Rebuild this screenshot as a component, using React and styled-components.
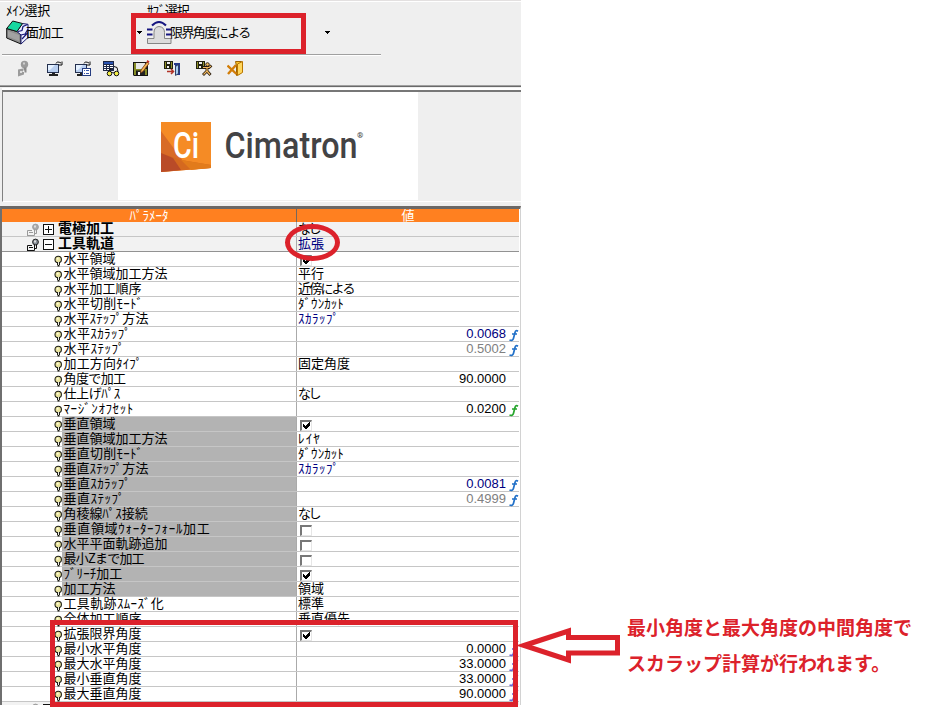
import React from 'react';
import styled, { createGlobalStyle } from 'styled-components';

const Global = createGlobalStyle`
  body { margin: 0; background: #fff; }
  * { box-sizing: border-box; }
  svg { display: block; flex: none; }
`;

const RED = '#dc222b';
const UI_FONT = '"Noto Sans CJK JP", "Liberation Sans", sans-serif';

/* Letter spacing that brings a 13px string to its designed width. */
const isHalf = (c) => /[\uff61-\uff9f\x20-\x7e]/.test(c);
const spacing = (text, width, size = 13) => {
  const chars = [...text];
  const natural = chars.reduce((n, c) => n + (isHalf(c) ? size / 2 : size), 0);
  return (width - natural) / chars.length;
};

const Page = styled.div`
  position: relative;
  width: 925px;
  height: 709px;
  overflow: hidden;
  display: flex;
  background: #fff;
  font-family: ${UI_FONT};
  font-size: 13px;
  color: #000;
`;

const Panel = styled.main`
  width: 521px;
  height: 705px;
  flex: none;
  overflow: hidden;
  display: flex;
  flex-direction: column;
  background: #efefef;
`;

const Fit = styled.span`
  white-space: nowrap;
  letter-spacing: ${(p) => p.$ls}px;
`;

const Label = ({ text, width, size }) => <Fit $ls={spacing(text, width, size)}>{text}</Fit>;

const Selectors = styled.section`
  height: 54px;
  flex: none;
  border-top: 1px solid #e3e0e0;
  box-shadow: inset 0 1px #fff;
  display: grid;
  grid-template-columns: 141px 240px;
`;

const Selector = styled.div`
  display: flex;
  flex-direction: column;
  padding: 1px 0 0 6px;
`;

const Caption = styled.div`
  height: 15px;
  line-height: 15px;
`;

const Choice = styled.div`
  display: flex;
  align-items: center;
  height: 27px;
  line-height: 15px;
  margin-top: 2px;
`;

const ChoiceText = styled.div`
  margin: 0 0 2px ${(p) => p.$pull}px;
`;

const Rule = styled.div`
  width: 379px;
  height: 2px;
  flex: none;
  margin-left: 2px;
  background: #a0a0a0;
  border-bottom: 1px solid #fff;
`;

const Toolbar = styled.nav`
  height: 29px;
  flex: none;
  display: grid;
  grid-template-columns: 32px 28px 28px 30px 31px 32px 31px 20px;
  padding: 4px 0 0 15px;
`;

const Banner = styled.section`
  height: 121px;
  flex: none;
  display: flex;
  flex-direction: column;
  border-top: 1px solid #a0a0a0;
  box-shadow: inset 0 1px #696969;
  padding-top: 2px;
`;

const BannerWell = styled.div`
  height: 112px;
  margin: 2px 0 0 2px;
  border-left: 1px solid #808080;
  border-top: 2px solid #777;
  border-bottom: 1px solid #fff;
  box-shadow: 0 -2px #fff;
  background: #efefef;
  padding-left: 115px;
`;

const LogoCard = styled.div`
  width: 300px;
  height: 108px;
  background: #fff;
  padding: 29px 0 0 42px;
`;

const Table = styled.section`
  flex: none;
  width: 521px;
  border-top: 3px solid #6b6866;
  border-left: 2px solid #6f6f6f;
  border-right: 1px solid #d2d2d2;
  background: #fff;
  padding-right: 1px;
`;

const TableHead = styled.div`
  height: 13px;
  display: grid;
  grid-template-columns: 295px 1fr;
  background: #ff8020;
  color: #fff;
  line-height: 11px;
  text-align: center;
`;

const HeadCell = styled.div`
  height: 13px;
  border-right: ${(p) => (p.$divider ? '1px solid #75685e' : '0')};
`;

const Row = styled.div`
  height: 15px;
  display: grid;
  grid-template-columns: 295px 1fr;
  background: ${(p) => (p.$group ? '#f2f2f2' : '#fff')};
  border-bottom: 1px solid ${(p) => (p.$strong ? '#929292' : '#c6c6c6')};
`;

const NameCell = styled.div`
  display: flex;
  height: 14px;
  line-height: 11px;
  padding-left: ${(p) => (p.$group ? 24 : 52)}px;
  border-right: 1px solid #aaa;
`;

const Name = styled.div`
  flex: 1;
  height: 14px;
  padding-left: 1.5px;
  background: ${(p) => (p.$marked ? '#b3b3b3' : 'transparent')};
`;

const GroupName = styled.div`
  font-weight: 700;
  font-size: 14px;
  margin-left: 4px;
  line-height: 10px;
`;

const inks = { blue: '#000080', gray: '#808080', black: '#000' };

const ValueCell = styled.div`
  display: flex;
  height: 14px;
  line-height: 11px;
  padding-left: 1px;
  color: ${(p) => inks[p.$ink || 'black']};
`;

const NumberText = styled.div`
  width: 208px;
  text-align: right;
  font-family: "Liberation Sans", sans-serif;
  line-height: 14px;
`;

const FnMark = styled.span`
  width: 12px;
  height: 17px;
  margin: 1px 0 -3px 2px;
`;

const Check = styled.span`
  width: 12px;
  height: 11px;
  margin: 3px 0 0 2px;
  border-top: 2px solid #777;
  border-left: 2px solid #777;
  border-right: 1px solid #e6e6e6;
  border-bottom: 1px solid #e6e6e6;
  background: #fff;
`;

const Sidebar = styled.aside`
  flex: 1;
  padding: 609px 0 0 106px;
`;

const Note = styled.p`
  margin: 0;
  font-size: 19px;
  font-weight: 700;
  line-height: 36px;
  color: ${RED};
  white-space: nowrap;
`;

const Highlight = styled.div`
  position: absolute;
  left: ${(p) => p.$x}px;
  top: ${(p) => p.$y}px;
  width: ${(p) => p.$w}px;
  height: ${(p) => p.$h}px;
  border: 5px solid ${RED};
  border-radius: ${(p) => (p.$round ? '50%' : '0')};
`;

const ArrowLayer = styled.svg`
  position: absolute;
  left: 512px;
  top: 622px;
`;

const Caret = styled.svg`
  margin-left: ${(p) => p.$gap}px;
`;

const Dropdown = ({ gap }) => (
  <Caret $gap={gap} width="5" height="3" shapeRendering="crispEdges">
    <path d="M0 0h5v1H4v1H3v1H2V2H1V1H0z" />
  </Caret>
);

const CubeIcon = () => (
  <svg width="23" height="25" viewBox="0 0 23 25">
    <path d="M.7 8.500L11 11.500l4 3v9.500L.7 18z" fill="#8c8c8c" stroke="#111" />
    <path d="M11 11.500L16.500 3.500l5.500.8v13.200L15 24v-9z" fill="#eef0ff" stroke="#18186c" />
    <path d="M.7 8.500L6.700 1l9.800 2.500L11 11.500z" fill="#16d7a0" stroke="#111" />
    <path d="M12 11.500l4-1 1-4 4.500-2M15 15l4-1 3-5M16 19l5.500-6" fill="none" stroke="#17177b" strokeWidth="1.200" />
    <path d="M2 11l11 4v6L2 16.500z" fill="#a2a2a2" />
  </svg>
);

const ContourIcon = () => (
  <svg width="25" height="23" viewBox="0 0 25 23">
    <path d="M.5 22.500v-5h6.500v-6q0-5.500 5-6 5.500.5 5.500 6v6H24v5z" fill="#dcdcdc" stroke="#858585" />
    <path d="M5 4.500Q12-2.500 19 4.500M0 8.500h5.500M0 13.500h5.500M19 8.500h5.500M19 13.500h5.500" fill="none" stroke="#161680" strokeWidth="2" />
  </svg>
);

const Icon = ({ children }) => (
  <svg width="17" height="17" viewBox="0 0 17 17">{children}</svg>
);

const PinIcon = () => (
  <Icon>
    <circle cx="9.500" cy="4.500" r="3.700" fill="#9b9b9b" />
    <path d="M8.500 7.500h3v5h-2v-2h-1z" fill="#8b8b8b" />
    <path d="M3 9.500l5-1v2.500l-1 1h2v2.500l-6 2z" fill="#9b9b9b" />
    <path d="M5 11h2v2H5z" fill="#dedede" />
    <path d="M8 2.500h2v2H8z" fill="#d0d0d0" />
  </Icon>
);

const Screen = () => (
  <>
    <path d="M0 4h12v9H0z" fill="#24304e" />
    <path d="M1 5h10v7H1z" fill="#b9cff0" />
    <path d="M1 5h7L3 10H1z" fill="#e5f1ff" />
    <path d="M5 13h3v1H5zM2 14h9v2H2z" fill="#222" />
    <path d="M9 3.500Q10 .8 14 3M11.500 5h3.500V1.500" fill="none" stroke="#111" />
  </>
);

const MonitorIcon = () => <Icon><Screen /></Icon>;

const MonitorListIcon = () => (
  <Icon>
    <Screen />
    <path d="M7 8h9v8H7z" fill="#253d80" />
    <path d="M8 9h7v6H8z" fill="#fff" />
    <path d="M9 10h1v1H9zM11 10h3v1h-3zM9 13h1v1H9zM11 13h3v1h-3z" fill="#3958ad" />
  </Icon>
);

const TableGlassesIcon = () => (
  <Icon>
    <path d="M0 1h11v10H0z" fill="#202a48" />
    <path d="M1 2h9v2H1z" fill="#2b55b4" />
    <path d="M1 5h2v1H1zM4 5h2v1H4zM7 5h3v1H7zM1 7h2v1H1zM4 7h2v1H4zM7 7h3v1H7zM1 9h2v1H1zM4 9h2v1H4z" fill="#fff" />
    <path d="M11 6.500l3 1 1 4M8 8l-2 3.500M8 13q1.500-1 3 0" stroke="#111" fill="none" />
    <circle cx="6.500" cy="13.500" r="2.300" fill="#f4ef48" stroke="#111" />
    <circle cx="13.500" cy="13.500" r="2.300" fill="#f4ef48" stroke="#111" />
  </Icon>
);

const SavePenIcon = () => (
  <Icon>
    <path d="M0 2h15v14H1l-1-1z" fill="#151515" />
    <path d="M1 3h2v12H1zM12 9h2v6h-2zM3 9h10v1.500H3z" fill="#858c25" />
    <path d="M3 3h9v6H3z" fill="#e8e8e8" />
    <path d="M4 11h8v4H4z" fill="#222" />
    <path d="M5 12h2v3H5z" fill="#fff" />
    <path d="M14 2l2 1.500-6 8-2.500 1.500.5-3z" fill="#f3b251" stroke="#6d3515" strokeWidth=".8" />
    <path d="M13.500 1.500l1-1.500 2 1.500-1 1.500z" fill="#c82b22" />
  </Icon>
);

const Disk = () => (
  <>
    <path d="M0 1h9v8H0z" fill="#202010" />
    <path d="M1 2h1v6H1zM7 2h1v6H7z" fill="#929329" />
    <path d="M3 2h3v2H3zM3 6h2v2H3z" fill="#eee" />
  </>
);

const SaveExitIcon = () => (
  <Icon>
    <Disk />
    <path d="M10 3h6v12h-5V5h-1z" fill="#26388b" />
    <path d="M11.500 6.500l3-2v9l-3 2z" fill="#a9cdf1" stroke="#24304e" strokeWidth=".8" />
    <path d="M3 11.500h6M7 9l2.500 2.500L7 14" fill="none" stroke="#b13226" strokeWidth="1.500" />
  </Icon>
);

const SaveRunIcon = () => (
  <Icon>
    <Disk />
    <path d="M7 7.500h6l2.500-2M11 8v3l-4 4M11 11l3.500 4" fill="none" stroke="#24180c" strokeWidth="2.800" />
    <path d="M7 7.500h6l2-1.500M11 8v3l-3.500 3.500M11 11l3 3.500" fill="none" stroke="#f0b860" strokeWidth="1.200" />
    <circle cx="11.500" cy="4.500" r="1.800" fill="#f0b860" stroke="#24180c" strokeWidth=".9" />
  </Icon>
);

const ExitIcon = () => (
  <Icon>
    <path d="M8.500 1.500h6v11l-5 3V6z" fill="#f9c22a" stroke="#9c6200" />
    <path d="M10.500 4l5-2.500v11l-5 3z" fill="#ffd65c" stroke="#b87500" />
    <path d="M.5 5.500l9 8.500M9 5L1 14" stroke="#d27d08" strokeWidth="2.400" />
  </Icon>
);

const BulbIcon = () => (
  <svg width="8" height="15" viewBox="0 0 8 15" overflow="visible">
    <circle cx="4.200" cy="7.500" r="3.200" fill="#e9e49c" stroke="#1c1c14" strokeWidth="1.100" />
    <path d="M3 10.500h3V13H5.500v1.500h-2V13H3z" fill="#1c1c14" />
    <path d="M4 10h1v3H4z" fill="#e8e8e0" />
    <path d="M3 6h1.500v1.500H3z" fill="#fffbe0" />
  </svg>
);

const TreePinIcon = ({ faded }) => {
  const ink = faded ? '#9a9a9a' : '#111';
  return (
    <svg width="15" height="15" viewBox="0 0 15 15">
      <path d="M1.500 14V8.500H6M1.500 13.500h7V11M3 10.500h4" fill="none" stroke={ink} />
      <circle cx="9.500" cy="5" r="2.900" fill={faded ? '#aaa' : '#858c95'} stroke={ink} strokeWidth=".9" />
      <path d="M8 3.500h2v2H8z" fill="#ddd" />
      <path d="M8.500 8v3.500h2V8" fill="none" stroke={ink} />
    </svg>
  );
};

const Expander = ({ open }) => (
  <svg width="13" height="14" viewBox="0 0 13 14" shapeRendering="crispEdges">
    <rect x="2.500" y="2.500" width="10" height="10" fill="#fff" stroke="#111" />
    <path d={open ? 'M4 7.500h7' : 'M4 7.500h7M7.500 4v7'} stroke="#111" fill="none" />
  </svg>
);

const Fn = ({ color }) => (
  <FnMark>
    <svg width="12" height="14" viewBox="0 0 12 14">
      <path d="M10 3.200Q7.700 1.800 7 4.500L5.500 10.200Q4.700 13.300 1.500 12M4 6h5" fill="none" stroke={color} strokeWidth="1.700" />
    </svg>
  </FnMark>
);

const Tick = () => (
  <svg width="9" height="8" viewBox="0 0 9 8" shapeRendering="crispEdges">
    <path d="M1 2v3l2 2h1l4-4V0L3.500 4z" />
  </svg>
);

const CimatronLogo = () => (
  <svg width="206" height="56" viewBox="0 0 206 56">
    <path d="M1 1h50v46L1 51z" fill="#f58b25" />
    <path d="M1 10l22 30L1 51z" fill="#d86b27" />
    <path d="M1 32l20 7 30 5v3L1 51z" fill="#d5691f" />
    <path d="M1 32l12 5 8 12-20 2z" fill="#b94b28" />
    <path d="M21 39l30 5v3l-20 2z" fill="#e27b1b" />
    <g fontFamily="Roboto, sans-serif" fontWeight="500">
      <text x="13" y="37" fontSize="37" fill="#fff" textLength="26" lengthAdjust="spacingAndGlyphs">Ci</text>
      <text x="64.500" y="37" fontSize="37" fill="#434345" textLength="133" lengthAdjust="spacingAndGlyphs">Cimatron</text>
      <text x="197" y="17" fontSize="8" fontWeight="700" fill="#434345">®</text>
    </g>
  </svg>
);

const BLUE_FN = '#2070c8';
const GREEN_FN = '#26a52c';
const VIOLET_FN = '#6a65d8';

/* name, name width, value descriptor */
const plain = [
  ['水平領域', 52, { check: true }],
  ['水平領域加工方法', 104, { text: '平行', w: 26 }],
  ['水平加工順序', 78, { text: '近傍による', w: 56 }],
  ['水平切削ﾓｰﾄﾞ', 80, { text: 'ﾀﾞｳﾝｶｯﾄ', w: 46 }],
  ['水平ｽﾃｯﾌﾟ方法', 85, { text: 'ｽｶﾗｯﾌﾟ', w: 42, ink: 'blue' }],
  ['水平ｽｶﾗｯﾌﾟ', 68, { num: '0.0068', ink: 'blue', fn: BLUE_FN }],
  ['水平ｽﾃｯﾌﾟ', 62, { num: '0.5002', ink: 'gray', fn: BLUE_FN }],
  ['加工方向ﾀｲﾌﾟ', 79, { text: '固定角度', w: 52 }],
  ['角度で加工', 62, { num: '90.0000' }],
  ['仕上げﾊﾟｽ', 56, { text: 'なし', w: 21 }],
  ['ﾏｰｼﾞﾝｵﾌｾｯﾄ', 71, { num: '0.0200', fn: GREEN_FN }],
];
const marked = [
  ['垂直領域', 52, { check: true }],
  ['垂直領域加工方法', 104, { text: 'ﾚｲﾔ', w: 23 }],
  ['垂直切削ﾓｰﾄﾞ', 80, { text: 'ﾀﾞｳﾝｶｯﾄ', w: 46 }],
  ['垂直ｽﾃｯﾌﾟ方法', 85, { text: 'ｽｶﾗｯﾌﾟ', w: 42, ink: 'blue' }],
  ['垂直ｽｶﾗｯﾌﾟ', 68, { num: '0.0081', ink: 'blue', fn: BLUE_FN }],
  ['垂直ｽﾃｯﾌﾟ', 62, { num: '0.4999', ink: 'gray', fn: BLUE_FN }],
  ['角稜線ﾊﾟｽ接続', 84, { text: 'なし', w: 21 }],
  ['垂直領域ｳｫｰﾀｰﾌｫｰﾙ加工', 147, { check: false }],
  ['水平平面軌跡追加', 104, { check: false }],
  ['最小Zまで加工', 79, { check: false }],
  ['ﾌﾞﾘｰﾁ加工', 59, { check: true }],
  ['加工方法', 52, { text: '領域', w: 26 }],
];
const tail = [
  ['工具軌跡ｽﾑｰｽﾞ化', 101, { text: '標準', w: 26 }],
  ['全体加工順序', 78, { text: '垂直優先', w: 52 }],
  ['拡張限界角度', 78, { check: true }],
  ['最小水平角度', 78, { num: '0.0000', fn: VIOLET_FN }],
  ['最大水平角度', 78, { num: '33.0000', fn: VIOLET_FN }],
  ['最小垂直角度', 78, { num: '33.0000', fn: VIOLET_FN }],
  ['最大垂直角度', 78, { num: '90.0000', fn: VIOLET_FN }],
];

const Value = ({ v }) => (
  <ValueCell $ink={v.ink}>
    {v.check !== undefined && <Check>{v.check && <Tick />}</Check>}
    {v.text && <Label text={v.text} width={v.w} />}
    {v.num && <NumberText>{v.num}</NumberText>}
    {v.fn && <Fn color={v.fn} />}
  </ValueCell>
);

const ParamRow = ({ data: [name, width, value], isMarked }) => (
  <Row>
    <NameCell>
      <BulbIcon />
      <Name $marked={isMarked}><Label text={name} width={width} /></Name>
    </NameCell>
    <Value v={value} />
  </Row>
);

const GroupRow = ({ name, open, strong, value }) => (
  <Row $group $strong={strong}>
    <NameCell $group>
      <TreePinIcon faded={!open} />
      <Expander open={open} />
      <GroupName>{name}</GroupName>
    </NameCell>
    {value && <Value v={value} />}
  </Row>
);

export default function App() {
  return (
    <Page>
      <Global />
      <Panel>
        <Selectors>
          <Selector>
            <Caption><Label text="ﾒｲﾝ選択" width={44} /></Caption>
            <Choice>
              <CubeIcon />
              <ChoiceText $pull={-3}><Label text="面加工" width={37} /></ChoiceText>
              <Dropdown gap={74} />
            </Choice>
          </Selector>
          <Selector>
            <Caption><Label text="ｻﾌﾞ選択" width={41} /></Caption>
            <Choice>
              <ContourIcon />
              <ChoiceText $pull={-2}><Label text="限界角度による" width={80} /></ChoiceText>
              <Dropdown gap={75} />
            </Choice>
          </Selector>
        </Selectors>
        <Rule />
        <Toolbar>
          <PinIcon />
          <MonitorIcon />
          <MonitorListIcon />
          <TableGlassesIcon />
          <SavePenIcon />
          <SaveExitIcon />
          <SaveRunIcon />
          <ExitIcon />
        </Toolbar>
        <Banner>
          <BannerWell>
            <LogoCard><CimatronLogo /></LogoCard>
          </BannerWell>
        </Banner>
        <Table>
          <TableHead>
            <HeadCell $divider><Label text="ﾊﾟﾗﾒｰﾀ" width={39} /></HeadCell>
            <HeadCell>値</HeadCell>
          </TableHead>
          <GroupRow name="電極加工" value={{ text: 'なし', w: 21 }} />
          <GroupRow name="工具軌道" open strong value={{ text: '拡張', w: 26, ink: 'blue' }} />
          {plain.map((d) => <ParamRow key={d[0]} data={d} />)}
          {marked.map((d) => <ParamRow key={d[0]} data={d} isMarked />)}
          {tail.map((d) => <ParamRow key={d[0]} data={d} />)}
          <GroupRow name="" />
        </Table>
      </Panel>
      <Sidebar>
        <Note>最小角度と最大角度の中間角度で</Note>
        <Note>スカラップ計算が行われます。</Note>
      </Sidebar>
      <Highlight $x={131} $y={13} $w={175} $h={41} />
      <Highlight $x={285} $y={224} $w={55} $h={37} $round />
      <Highlight $x={50} $y={620} $w={468} $h={87} />
      <ArrowLayer width="112" height="46">
        <path d="M12 23.500L56.500 9v6.500h49V31h-49v7z" fill="#fff" stroke={RED} strokeWidth="5" />
      </ArrowLayer>
    </Page>
  );
}
